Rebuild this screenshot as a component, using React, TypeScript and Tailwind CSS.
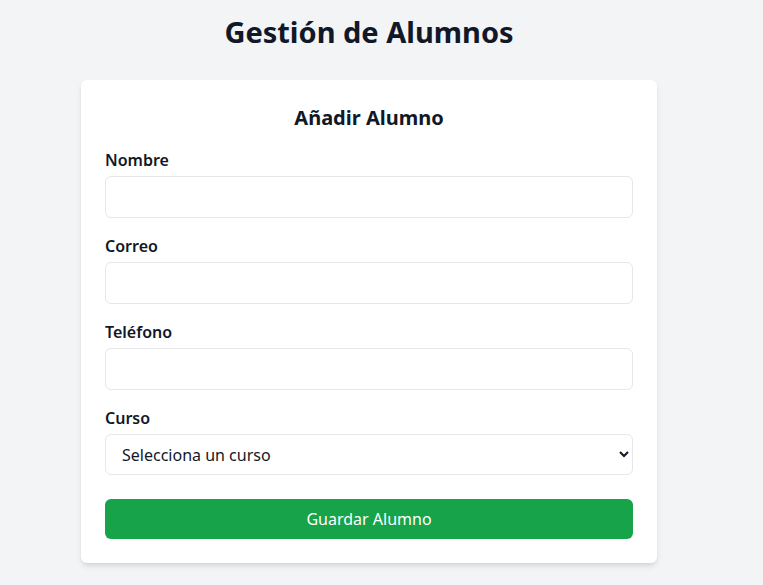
import React from "react";

export default function App() {
  const fields = [
    { label: "Nombre", type: "text" },
    { label: "Correo", type: "email" },
    { label: "Teléfono", type: "tel" },
  ];
  return (
    <div
      className="min-h-screen bg-gray-100 text-[#111827] pr-[25px] pt-[14px]"
      style={{ fontFamily: '"Noto Sans", "Open Sans", sans-serif' }}
    >
      <h1 className="text-[29px] leading-9 font-bold text-center mb-[30px]">Gestión de Alumnos</h1>
      <div className="max-w-xl mx-auto bg-white rounded-md shadow-md p-6">
        <h2 className="text-xl font-bold text-center mb-4">Añadir Alumno</h2>
        {fields.map((f) => (
          <div key={f.label} className="mb-4">
            <label className="block font-semibold mb-1">{f.label}</label>
            <input
              type={f.type}
              className="w-full h-[42px] border border-gray-200 rounded-md px-3 py-2 bg-white outline-none"
            />
          </div>
        ))}
        <div className="mb-6">
          <label className="block font-semibold mb-1">Curso</label>
          <select className="w-full h-[41px] border border-gray-200 rounded-md px-3 bg-white text-[#111827] outline-none">
            <option>Selecciona un curso</option>
          </select>
        </div>
        <button className="w-full h-10 bg-[#16a34a] text-white rounded-md">Guardar Alumno</button>
      </div>
    </div>
  );
}
